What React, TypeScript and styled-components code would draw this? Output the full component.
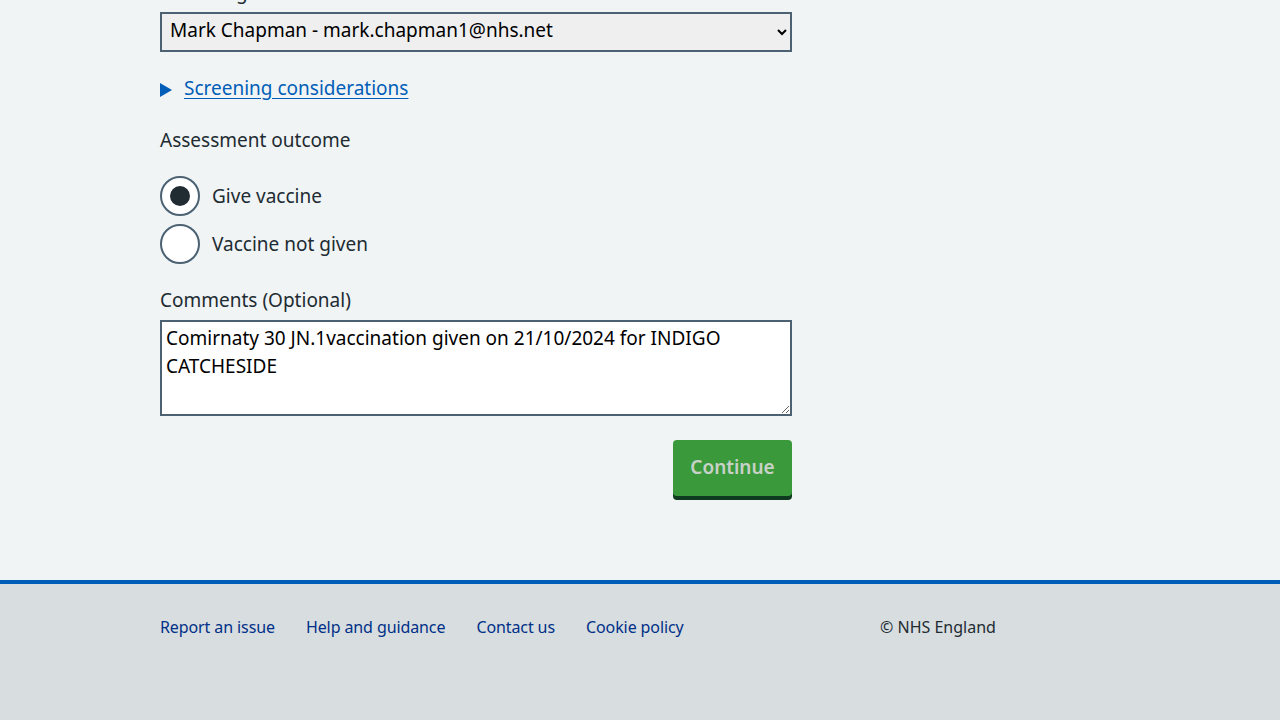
import React, { useState } from "react";
import styled, { createGlobalStyle } from "styled-components";

const GlobalStyle = createGlobalStyle`
  html, body {
    margin: 0;
    padding: 0;
    background: #f0f4f5;
    font-family: "Noto Sans", "Open Sans", sans-serif;
    color: #212b32;
  }
  * { box-sizing: border-box; }
`;

const Page = styled.div`
  min-height: 720px;
  display: flex;
  flex-direction: column;
`;

const Main = styled.main`
  width: 632px;
  margin: -22px 0 0 160px;
  padding-bottom: 84px;
`;

const FieldLabel = styled.label`
  display: block;
  font-size: 19px;
  line-height: 28px;
  margin-bottom: 6px;
`;

const Group = styled.div<{ $gap?: number }>`
  margin-bottom: ${(p) => p.$gap ?? 24}px;
`;

const Select = styled.select`
  width: 632px;
  height: 40px;
  border: 2px solid #4c6272;
  border-radius: 0;
  background: #efefef;
  padding: 0 4px 4px 4px;
  font-family: inherit;
  font-size: 19px;
  color: #000;
`;

const Details = styled.div`
  display: flex;
  align-items: center;
  gap: 12px;
  margin: 22px 0 24px;
`;

const Triangle = styled.span`
  width: 0;
  height: 0;
  border-top: 7px solid transparent;
  border-bottom: 7px solid transparent;
  border-left: 12px solid #005eb8;
  margin-top: 3px;
`;

const SummaryLink = styled.a`
  color: #005eb8;
  font-size: 19px;
  line-height: 28px;
  text-decoration: underline;
  text-underline-offset: 3px;
`;

const Legend = styled.div`
  font-size: 19px;
  line-height: 28px;
  margin-bottom: 22px;
`;

const RadioRow = styled.label`
  display: flex;
  align-items: center;
  gap: 12px;
  margin-bottom: 8px;
  font-size: 19px;
  cursor: pointer;
`;

const RadioCircle = styled.span<{ $on: boolean }>`
  width: 40px;
  height: 40px;
  border-radius: 50%;
  border: 2px solid #4c6272;
  background: #fff;
  display: flex;
  align-items: center;
  justify-content: center;
  &::after {
    content: "";
    width: 20px;
    height: 20px;
    border-radius: 50%;
    background: #212b32;
    display: ${(p) => (p.$on ? "block" : "none")};
  }
`;

const TextArea = styled.textarea`
  display: block;
  width: 632px;
  height: 96px;
  border: 2px solid #4c6272;
  border-radius: 0;
  background: #fff;
  padding: 2px 4px;
  font-family: inherit;
  font-size: 19px;
  line-height: 28px;
  color: #000;
`;

const Actions = styled.div`
  display: flex;
  justify-content: flex-end;
  margin-top: 24px;
`;

const Button = styled.button`
  background: #3a9a3b;
  color: #c8d1c8;
  border: none;
  border-radius: 4px;
  box-shadow: 0 4px 0 #0e3b1f;
  font-family: inherit;
  font-weight: 600;
  font-size: 19px;
  height: 56px;
  width: 119px;
  padding: 0 0 2px;
`;

const Footer = styled.footer`
  border-top: 4px solid #005eb8;
  background: #d8dde0;
  height: 140px;
  padding: 31px 0 0 160px;
  display: flex;
  font-size: 16px;
`;

const FooterLinks = styled.ul`
  list-style: none;
  display: flex;
  gap: 31px;
  margin: 0;
  padding: 0;
  width: 720px;
`;

const FooterLink = styled.a`
  color: #003087;
  text-decoration: none;
  line-height: 24px;
  letter-spacing: -0.1px;
`;

const Copyright = styled.p`
  margin: 0;
  line-height: 24px;
  color: #212b32;
`;

const outcomes = ["Give vaccine", "Vaccine not given"];

export default function App() {
  const [outcome, setOutcome] = useState(0);
  return (
    <Page>
      <GlobalStyle />
      <Main>
        <Group $gap={0}>
          <FieldLabel>Assessing clinician</FieldLabel>
          <Select defaultValue="mark">
            <option value="mark">Mark Chapman - mark.chapman1@nhs.net</option>
          </Select>
        </Group>
        <Details>
          <Triangle />
          <SummaryLink href="#">Screening considerations</SummaryLink>
        </Details>
        <Group $gap={22}>
          <Legend>Assessment outcome</Legend>
          {outcomes.map((o, i) => (
            <RadioRow key={o} onClick={() => setOutcome(i)}>
              <RadioCircle $on={outcome === i} />
              {o}
            </RadioRow>
          ))}
        </Group>
        <Group $gap={0}>
          <FieldLabel>Comments (Optional)</FieldLabel>
          <TextArea defaultValue="Comirnaty 30 JN.1vaccination given on 21/10/2024 for INDIGO CATCHESIDE" />
        </Group>
        <Actions>
          <Button>Continue</Button>
        </Actions>
      </Main>
      <Footer>
        <FooterLinks>
          <li><FooterLink href="#">Report an issue</FooterLink></li>
          <li><FooterLink href="#">Help and guidance</FooterLink></li>
          <li><FooterLink href="#">Contact us</FooterLink></li>
          <li><FooterLink href="#">Cookie policy</FooterLink></li>
        </FooterLinks>
        <Copyright>© NHS England</Copyright>
      </Footer>
    </Page>
  );
}
